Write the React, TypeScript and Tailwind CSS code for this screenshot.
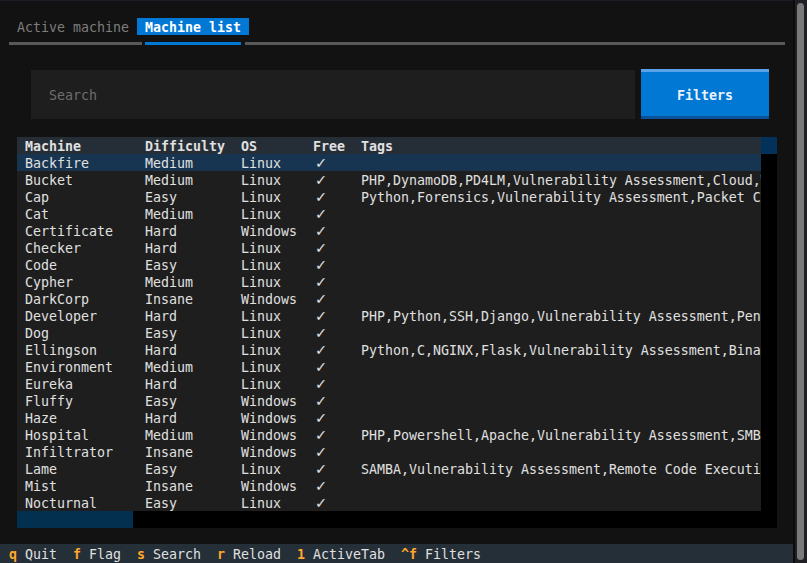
const rows: [string, string, string, string][] = [
  ["Backfire", "Medium", "Linux", ""],
  ["Bucket", "Medium", "Linux", "PHP,DynamoDB,PD4LM,Vulnerability Assessment,Cloud,Web Application"],
  ["Cap", "Easy", "Linux", "Python,Forensics,Vulnerability Assessment,Packet Capture Analysis"],
  ["Cat", "Medium", "Linux", ""],
  ["Certificate", "Hard", "Windows", ""],
  ["Checker", "Hard", "Linux", ""],
  ["Code", "Easy", "Linux", ""],
  ["Cypher", "Medium", "Linux", ""],
  ["DarkCorp", "Insane", "Windows", ""],
  ["Developer", "Hard", "Linux", "PHP,Python,SSH,Django,Vulnerability Assessment,Penetration Tester Level 1"],
  ["Dog", "Easy", "Linux", ""],
  ["Ellingson", "Hard", "Linux", "Python,C,NGINX,Flask,Vulnerability Assessment,Binary Exploitation"],
  ["Environment", "Medium", "Linux", ""],
  ["Eureka", "Hard", "Linux", ""],
  ["Fluffy", "Easy", "Windows", ""],
  ["Haze", "Hard", "Windows", ""],
  ["Hospital", "Medium", "Windows", "PHP,Powershell,Apache,Vulnerability Assessment,SMB,Web Application"],
  ["Infiltrator", "Insane", "Windows", ""],
  ["Lame", "Easy", "Linux", "SAMBA,Vulnerability Assessment,Remote Code Execution,Injection"],
  ["Mist", "Insane", "Windows", ""],
  ["Nocturnal", "Easy", "Linux", ""],
]

const bindings = [
  ["q", "Quit"],
  ["f", "Flag"],
  ["s", "Search"],
  ["r", "Reload"],
  ["1", "ActiveTab"],
  ["^f", "Filters"],
]

function Row({ cells, bold, className }: { cells: string[]; bold?: boolean; className: string }) {
  return (
    <div className={`flex h-[17px] leading-[19px] whitespace-pre overflow-hidden ${bold ? "font-bold" : ""} ${className}`}>
      <span className="w-[8px] shrink-0" />
      <span className="w-[120px] shrink-0">{cells[0]}</span>
      <span className="w-[96px] shrink-0">{cells[1]}</span>
      <span className="w-[72px] shrink-0">{cells[2]}</span>
      <span className={`w-[48px] shrink-0 ${bold ? "" : "font-['DejaVu_Sans',sans-serif] text-[14.5px] pl-[2px]"}`}>{cells[3]}</span>
      <span className="shrink-0">{cells[4]}</span>
    </div>
  )
}

export default function App() {
  return (
    <div className="flex w-[807px] h-[563px] bg-[#121212] text-[#e0e0e0] font-['DejaVu_Sans_Mono',monospace] text-[13.29px] leading-[17px] overflow-hidden">
      <div className="flex flex-col w-[793px] shrink-0 border-t border-[#1d1e25]">
        {/* tabs */}
        <div className="flex h-[17px] leading-[19px] mt-[17px] pl-[9px]">
          <div className="px-[8px] text-[#7d7d7d]">Active machine</div>
          <div className="px-[8px] bg-[#0178d4] text-white font-bold">Machine list</div>
        </div>
        <div className="flex h-[3px] mt-[7px]">
          <div className="ml-[9px] w-[133px] bg-[#585858]" />
          <div className="ml-[3px] w-[96px] bg-[#0178d4]" />
          <div className="ml-[4px] w-[540px] bg-[#585858]" />
        </div>

        {/* search */}
        <div className="flex h-[50px] mt-[24px]">
          <div className="ml-[31px] mt-[1px] w-[604px] h-[49px] bg-[#1e1e1e] flex items-center pl-[18px] pt-[2px] text-[#6e6e6e]">
            Search
          </div>
          <div className="ml-[6px] w-[128px] h-[50px] bg-[#0178d4] border-t-[3px] border-t-[#5aa3ea] border-b-[3px] border-b-[#0a529c] flex items-center justify-center pt-[2px] font-bold text-[#eaf2fa]">
            Filters
          </div>
        </div>

        {/* table */}
        <div className="flex ml-[17px] mt-[18px] w-[760px]">
          <div className="flex flex-col w-[744px]">
            <Row cells={["Machine", "Difficulty", "OS", "Free", "Tags"]} bold className="bg-[#252e37]" />
            {rows.map((r, i) => (
              <Row
                key={r[0]}
                cells={[r[0], r[1], r[2], "✓", r[3]]}
                className={i === 0 ? "bg-[#173550]" : "bg-[#1e1e1e]"}
              />
            ))}
            <div className="flex h-[17px] bg-black">
              <div className="w-[116px] bg-[#03304f]" />
            </div>
          </div>
          <div className="flex flex-col w-[16px] bg-black">
            <div className="h-[17px] bg-[#02325a]" />
          </div>
        </div>

        {/* footer */}
        <div className="mt-auto h-[19px] bg-[#242f38] pt-[2px] pl-[1px] flex whitespace-pre">
          {bindings.map(([k, l]) => (
            <span key={k} className="px-[8px]">
              <span className="font-bold text-[#ffa62b]">{k}</span> {l}
            </span>
          ))}
        </div>
      </div>

      {/* window scrollbar */}
      <div className="flex-1 flex border-l-2 border-[#0c0c0e] bg-[#1f1f24]">
        <div className="ml-[2px] mt-[3px] mb-[3px] w-[7px] rounded-full bg-[#7a7a7a]" />
      </div>
    </div>
  )
}
